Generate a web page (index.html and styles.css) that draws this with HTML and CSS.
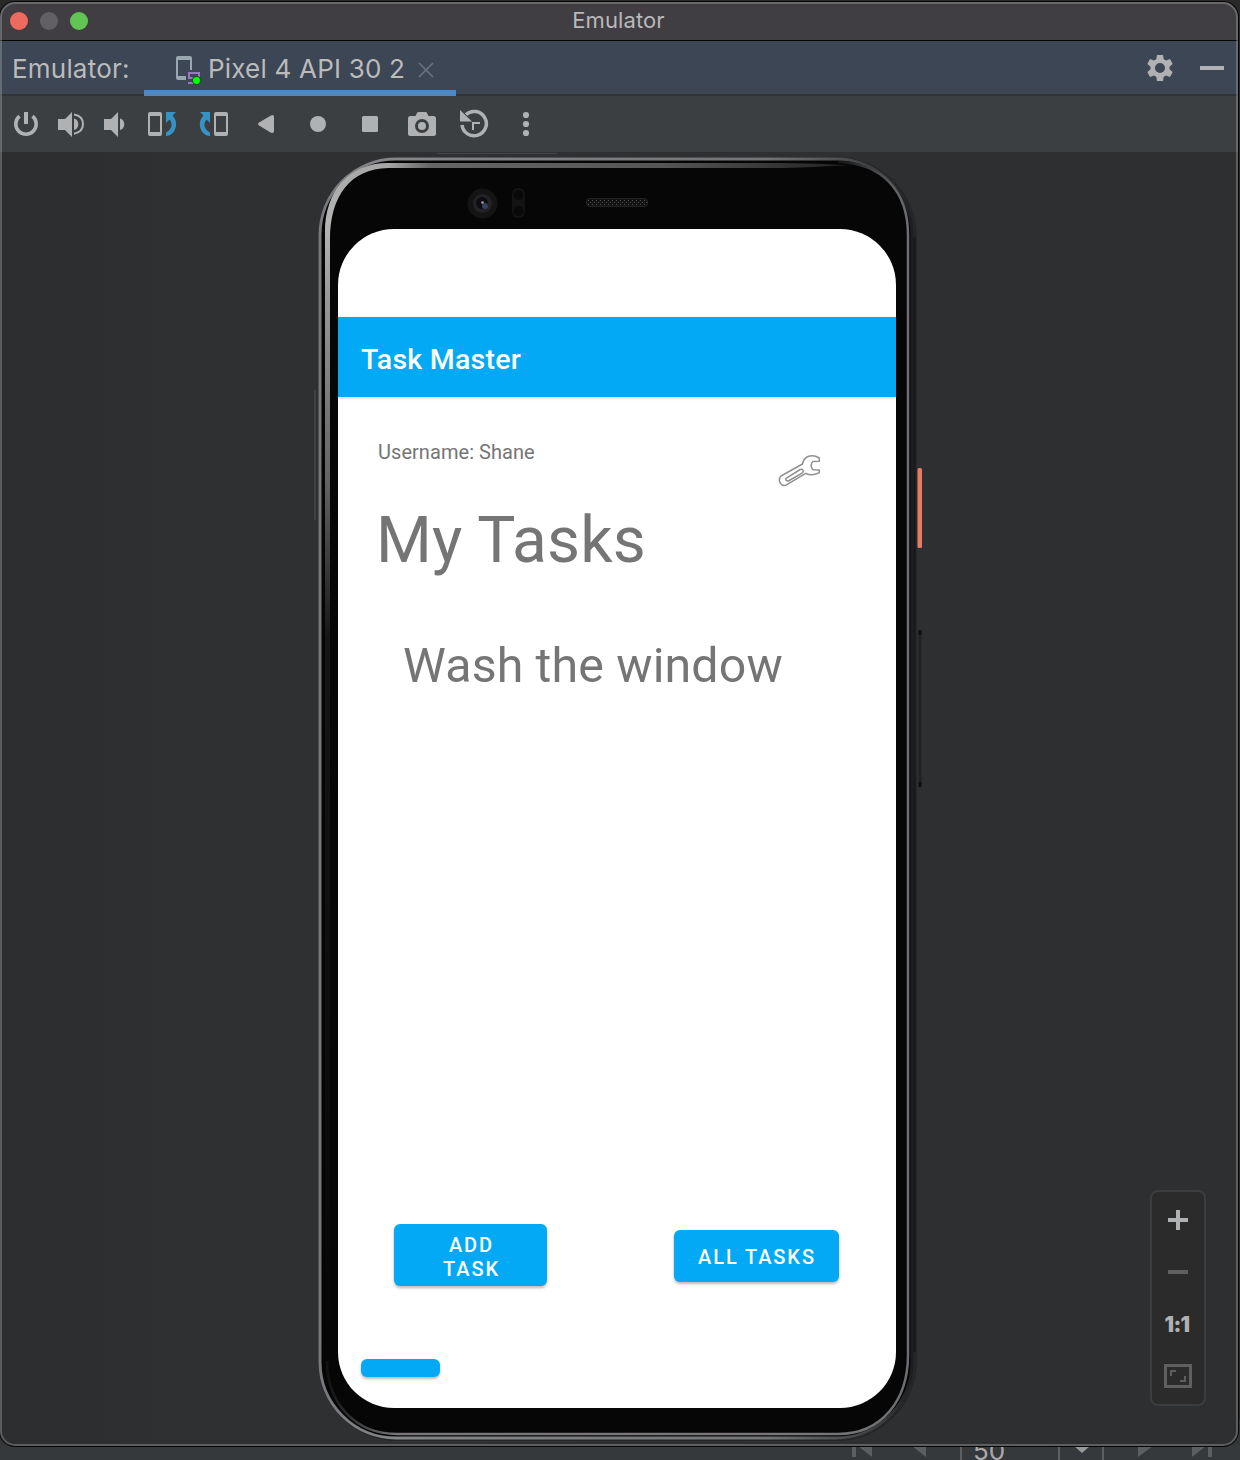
FILE: index.html
```html
<!DOCTYPE html>
<html lang="en">
<head>
<meta charset="utf-8">
<title>Emulator</title>
<link rel="stylesheet" href="styles.css">
</head>
<body>
<main class="window">
  <header class="titlebar">
    <div class="lights"><i class="light red"></i><i class="light gray"></i><i class="light green"></i></div>
    <span class="window-title">Emulator</span>
  </header>
  <nav class="tabs">
    <span class="tabs-label">Emulator:</span>
    <div class="tab">
      <svg class="tab-icon" width="28" height="30" viewBox="0 0 28 30">
        <path fill="#9aa7b0" fill-rule="evenodd" d="M3 0h12q2 0 2 2v12h-2V4H3v16h8v4H3q-2 0-2-2V2q0-2 2-2z"/>
        <path fill="none" stroke="#9876c0" stroke-width="2" d="M18 22h-4v-5h10v4M13 27h6"/>
        <circle cx="21.500" cy="24.500" r="4.600" fill="#18511f"/><circle cx="21.500" cy="24.500" r="3.500" fill="#00ff00"/>
      </svg>
      <span class="tab-name">Pixel 4 API 30 2</span>
      <svg class="tab-close" width="16" height="16" viewBox="0 0 16 16"><path d="M1 1l14 14M15 1L1 15" stroke="#687581" stroke-width="1.600"/></svg>
    </div>
    <div class="tab-actions">
      <svg width="26" height="28" viewBox="0 0 26 28"><path fill="#afb1b3" fill-rule="evenodd" d="M10 1h6l.8 4.300 2.200 1.300 4-1.600 2.700 5-3.200 2.700v2.600l3.200 2.700-2.700 5-4-1.600-2.200 1.300L16 27h-6l-.8-4.300L7 21.400 3 23 .3 18l3.200-2.700v-2.600L.3 10 3 5l4 1.600 2.200-1.300zM13 9a5 5 0 100 10 5 5 0 000-10z"/></svg>
      <svg width="24" height="4"><path fill="#afb1b3" d="M0 0h24v4H0z"/></svg>
    </div>
  </nav>
  <div class="toolbar">
    <svg width="540" height="56" viewBox="0 0 540 56" fill="#afb1b3">
      <path fill="none" stroke="#afb1b3" stroke-width="3.600" d="M19.500 20.200a10.200 10.200 0 1013 0"/><path d="M24 16h4v12h-4z"/>
      <path d="M58 23h7l7-7v25l-7-7h-7zM74 22.500a6 6 0 010 11.500z"/><path fill="none" stroke="#afb1b3" stroke-width="2" d="M74 18.500q9 1.500 9 9.500t-9 9.700"/>
      <path d="M104 23h7l7-7v25l-7-7h-7zM120 22.500a6 6 0 010 11.500z"/>
      <path fill-rule="evenodd" d="M150 16h10q2 0 2 2v20q0 2-2 2h-10q-2 0-2-2V18q0-2 2-2zm0 4v16h10V20z"/>
      <path fill="#3592c4" d="M166 16h10l-3.500 3.500C180 27 175 40 166 40v-3.500c6-3 7-9 3.500-13L166 27z"/>
      <path fill-rule="evenodd" d="M216 16h10q2 0 2 2v20q0 2-2 2h-10q-2 0-2-2V18q0-2 2-2zm0 4v16h10V20z"/>
      <path fill="#3592c4" d="M210 16h-10l3.500 3.500C196 27 201 40 210 40v-3.500c-6-3-7-9-3.500-13L210 27z"/>
      <path d="M259 26.500L271 19.600q3-1.600 3 1.400v14q0 3-3 1.700L259 29.500q-2-1.500 0-3z"/>
      <circle cx="318" cy="28" r="8"/><rect x="362" y="20" width="16" height="16" rx="1.500"/>
      <path fill-rule="evenodd" d="M410.500 20h5l1.500-3q.5-1 1.500-1h7q1 0 1.500 1l1.500 3h5q2.500 0 2.500 2.500v15q0 2.500-2.500 2.500h-23q-2.500 0-2.500-2.500v-15q0-2.500 2.500-2.500zM422 23a7 7 0 100 14 7 7 0 000-14zm0 3a4 4 0 110 8 4 4 0 010-8z"/>
      <path fill="none" stroke="#afb1b3" stroke-width="3.500" d="M462 29a12.200 12.200 0 104-10.500"/><path d="M460 14v11.500h12z"/><path d="M472 26h8v2h-6v6h-2z"/>
      <circle cx="526" cy="19" r="3.100"/><circle cx="526" cy="28" r="3.100"/><circle cx="526" cy="37" r="3.100"/>
    </svg>
  </div>
  <section class="stage">
    <div class="phone">
      <svg class="frame" width="612" height="1292" viewBox="0 0 612 1292" aria-hidden="true">
        <defs>
          <linearGradient id="edge" x1="0" y1="0" x2="1" y2="0"><stop offset="0" stop-color="#77787b"/><stop offset=".12" stop-color="#858689"/><stop offset=".75" stop-color="#747578"/><stop offset=".95" stop-color="#3a3b3d"/><stop offset="1" stop-color="#1d1e1f"/></linearGradient>
          <linearGradient id="shine" gradientUnits="userSpaceOnUse" x1="0" y1="10" x2="0" y2="1200"><stop offset="0" stop-color="#a6a6a6"/><stop offset=".05" stop-color="#b5b5b5"/><stop offset=".12" stop-color="#959595"/><stop offset=".27" stop-color="#626263"/><stop offset=".4" stop-color="#161617"/><stop offset="1" stop-color="#060607"/></linearGradient>
          <linearGradient id="top" gradientUnits="userSpaceOnUse" x1="76" y1="0" x2="535" y2="0"><stop offset="0" stop-color="#a6a6a6"/><stop offset=".09" stop-color="#666"/><stop offset=".6" stop-color="#555"/><stop offset="1" stop-color="#222"/></linearGradient>
          <linearGradient id="rim" gradientUnits="userSpaceOnUse" x1="520" y1="0" x2="598" y2="0"><stop offset="0" stop-color="#0a0a0a"/><stop offset=".6" stop-color="#4a4b4d"/><stop offset="1" stop-color="#707174"/></linearGradient>
          <linearGradient id="foot" gradientUnits="userSpaceOnUse" x1="15" y1="0" x2="596" y2="0"><stop offset="0" stop-color="#111"/><stop offset=".12" stop-color="#77777a"/><stop offset=".85" stop-color="#77777a"/><stop offset="1" stop-color="#6c6d70"/></linearGradient>
          <pattern id="mesh" width="4" height="4" patternUnits="userSpaceOnUse"><rect width="4" height="4" fill="#121212"/><path fill="#505050" d="M0 0h1v1H0zM2 2h1v1H2z"/></pattern>
        </defs>
        <path d="M3 238v130" stroke="#515255"/><path d="M125 1.500h120" stroke="#47474b"/>
        <rect x="6" y="5" width="599" height="1284" rx="80" fill="#252628"/>
        <rect x="8" y="7" width="592" height="1279" rx="76" fill="#050506" stroke="url(#edge)" stroke-width="3"/>
        <rect x="11.500" y="10.500" width="585" height="1271" rx="73" fill="#060607"/>
        <path d="M76 11C36 11 13 40 13 80v1120h5V88C18 44 38 17 76 16z" fill="url(#shine)"/>
        <path d="M76 11h390q42 0 69 2.500l-20 .7q-25 1.800-60 1.800H76z" fill="url(#top)"/>
        <path d="M526 10c44 1 70 29 70 73v1120" fill="none" stroke="url(#rim)" stroke-width="2.500"/>
        <path d="M596 1203c0 45-26 79-70 79H85c-42 0-70-31-70-73" fill="none" stroke="url(#foot)" stroke-width="2.500"/>
        <path d="M602.500 85v1115" stroke="#18191a" stroke-width="2"/>
        <rect x="605.500" y="316" width="4.500" height="80" rx="1.500" fill="#e87b66"/>
        <path d="M608 478v156" stroke="#202122" stroke-width="3"/><path d="M608 478v5M608 630v5" stroke="#101011" stroke-width="3"/>
        <circle cx="170.500" cy="51.500" r="15" fill="#141414"/><circle cx="170.500" cy="51.500" r="9.500" fill="#232326"/><circle cx="170" cy="51" r="6" fill="#0c0d12"/><circle cx="173" cy="54" r="3" fill="#334060"/><circle cx="170.500" cy="50.500" r="1.300" fill="#a5a5a7"/>
        <rect x="200" y="36" width="13" height="30" rx="6" fill="#131313"/><circle cx="206.500" cy="43" r="5" fill="#09090a"/><circle cx="206.500" cy="59" r="5" fill="#09090a"/>
        <rect x="274.500" y="46.500" width="61" height="8" rx="3" fill="url(#mesh)" stroke="#242424"/>
      </svg>
      <article class="screen">
        <header class="appbar">Task Master</header>
        <div class="user-row">
          <span class="username">Username: Shane</span>
          <svg class="wrench" width="44" height="34" viewBox="0 0 44 34" fill="#fff" stroke="#909090" stroke-width="1.500" stroke-linejoin="round"><path d="M3 22L24.500 10Q25.500 4.500 30 2.500q5.500-2 11.300 1.500v3.300l-6.500.3q-3.500 3.700.2 8.200l6.300.2v2.700q-7.500 4-13.600.6L8 31.200Q4.500 32.500 2.200 29q-2-4 .8-7z"/><path d="M8 24.300L22.200 15.500q2.500-.6 3 1.200.3 1.600-1.500 2.600L10.300 27q-3.300 0-2.300-2.700z"/></svg>
        </div>
        <h1>My Tasks</h1>
        <p class="task">Wash the window</p>
        <div class="buttons"><button class="btn add">ADD<br>TASK</button><button class="btn all">ALL TASKS</button></div>
        <button class="btn small" aria-label="Task"></button>
      </article>
    </div>
    <aside class="zoom-controls">
      <svg width="56" height="216" viewBox="0 0 56 216">
        <path fill="#afb1b3" d="M26 20h4v8h8v4h-8v8h-4v-8h-8v-4h8z"/><path fill="#5e5f60" d="M18 80h20v4H18z"/>
        <path fill="none" stroke="#5e5f60" stroke-width="3" d="M15.500 175.500h25v21h-25z"/><path fill="none" stroke="#5e5f60" stroke-width="2" d="M21 186v-5h5M30 191h5v-5"/>
      </svg>
      <span class="ratio">1:1</span>
    </aside>
  </section>
</main>
<footer class="behind">
  <svg width="120" height="14" viewBox="0 0 120 14" fill="#5d5e5f"><path d="M12 0h4v11h-4zM18 0h14v11zM72 0h14v11z"/></svg>
  <span class="field">50</span><span class="drop"></span>
  <svg width="136" height="14" viewBox="0 0 136 14" fill="#5d5e5f"><path d="M34 0h15L34 11zM88 0h14L88 11zM104 0h4v11h-4z"/></svg>
</footer>
</body>
</html>
```
FILE: styles.css
```css
* { box-sizing: border-box; }
body { margin: 0; width: 1240px; height: 1460px; padding-top: 2px; overflow: hidden; background: linear-gradient(#292929 0, #292929 1420px, #343738 1421px); font-family: Inter, "Liberation Sans", sans-serif; }
svg { display: block; flex: none; }
.window { position: relative; width: 1238px; height: 1444px; display: flex; flex-direction: column; overflow: hidden; border-radius: 15px; background: #2e2f31; box-shadow: 0 0 0 1px #080808; }
.window::after { content: ""; position: absolute; inset: 0; border: 2px solid rgba(170,170,170,.38); border-radius: 15px; pointer-events: none; }
.titlebar { height: 39px; flex: none; display: grid; grid-template-columns: 1fr auto 1fr; align-items: center; background: #403e43; border-bottom: 1px solid #050505; }
.lights { display: flex; gap: 12px; padding-left: 10px; }
.light { width: 18px; height: 18px; border-radius: 50%; }
.red { background: #ed6a5e; } .gray { background: #626065; } .green { background: #61c554; }
.window-title { font-size: 22px; line-height: 26px; color: #b9b8ba; letter-spacing: .1px; padding: 0 1px 2px 0; }
.tabs { height: 55px; flex: none; display: flex; background: #3c4654; border-bottom: 2px solid #323334; color: #bbb; font-size: 26px; line-height: 32px; }
.tabs-label { width: 144px; padding: 12px 0 0 12px; letter-spacing: .2px; white-space: nowrap; }
.tab { width: 312px; height: 55px; display: flex; align-items: flex-start; padding: 12px 0 0 31px; border-bottom: 6px solid #4a88c7; white-space: nowrap; }
.tab-icon { margin-top: 3px; }
.tab-name { width: 210px; padding-left: 5px; letter-spacing: .2px; }
.tab-close { margin: 9px 0 0 5px; }
.tab-actions { display: flex; align-items: center; gap: 27px; margin-left: auto; padding-right: 14px; }
.toolbar { height: 56px; flex: none; background: #3c3f41; }
.stage { position: relative; flex: 1; padding-left: 312px; background: linear-gradient(90deg, #2c2d2e, #2f3032 15%, #2e2f31); }
.phone { position: relative; width: 612px; height: 1292px; padding: 77px 0 0 26px; }
.frame { position: absolute; inset: 0; }
.screen { position: relative; width: 558px; height: 1179px; overflow: hidden; border-radius: 56px; background: #fff; padding-top: 88px; font-family: Roboto, sans-serif; color: #757575; }
.appbar { height: 80px; padding: 1px 23px 0; background: #03a9f4; color: #fff; font-size: 28.500px; font-weight: 500; line-height: 83px; letter-spacing: .25px; box-shadow: 0 1px 3px rgba(0,0,0,.2); }
.user-row { height: 94px; display: flex; padding: 43px 0 0 40px; }
.username { width: 400px; font-size: 20px; line-height: 24px; letter-spacing: .05px; }
.wrench { margin-top: 14px; }
h1 { margin: 12px 0 0 38px; font-size: 64px; line-height: 76px; font-weight: 400; letter-spacing: .15px; }
.task { margin: 58px 0 0 65px; font-size: 48.300px; line-height: 58px; letter-spacing: .15px; }
.buttons { display: flex; align-items: center; justify-content: space-between; margin: 529px 57px 0 56px; }
.btn { border: 0; border-radius: 6px; background: #03a9f4; color: #fff; font: 500 20px/24px Roboto, sans-serif; letter-spacing: 1.900px; box-shadow: 0 2px 3px rgba(0,0,0,.28); padding: 0; white-space: nowrap; }
.add { width: 153px; height: 62px; padding: 3px 0 0 2px; } .all { width: 165px; height: 52px; padding: 1px 0 0 1px; margin-top: 2px; }
.small { display: block; width: 79px; height: 18px; margin: 73px 0 0 23px; }
.zoom-controls { position: absolute; left: 1150px; top: 1038px; width: 56px; height: 216px; border-radius: 8px; background: #2b2b2b; box-shadow: inset 0 0 0 2px #3c3d3e; }
.ratio { position: absolute; left: 0; right: 2px; top: 122px; text-align: center; color: #afb1b3; font-size: 21px; line-height: 25px; font-weight: 900; letter-spacing: -.6px; }
.behind { height: 14px; display: flex; padding-left: 840px; overflow: hidden; background: #35393b; }
.field { width: 100px; height: 14px; padding-left: 11px; border: solid #5d6062; border-width: 0 2px; color: #aaa; font-size: 26px; line-height: 9px; }
.drop { width: 44px; border-right: 2px solid #5d6062; padding: 0 0 0 14px; }
.drop::before { content: ""; display: block; width: 0; border: solid transparent; border-width: 7px 8px 0; border-top-color: #999; }
```
